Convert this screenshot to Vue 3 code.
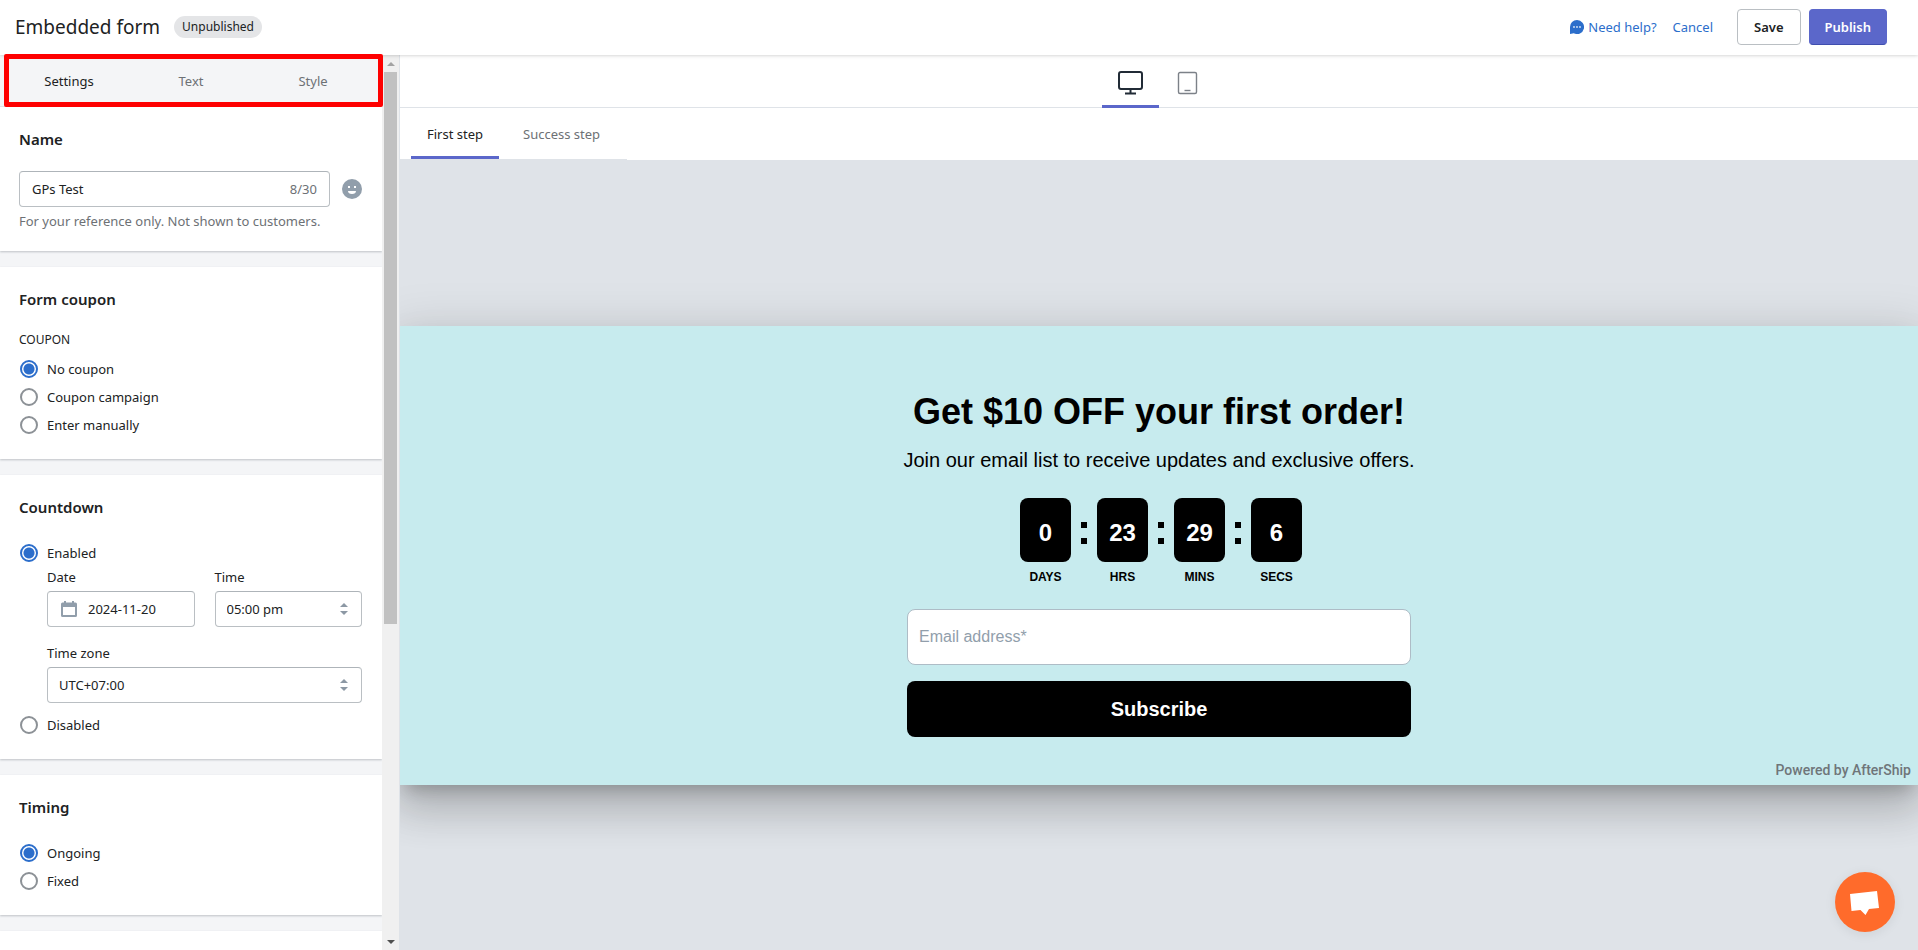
<script setup>
import { ref } from 'vue'

const panelTabs = ['Settings', 'Text', 'Style']
const panelTab = ref('Settings')
const stepTabs = ['First step', 'Success step']
const stepTab = ref('First step')
const device = ref('desktop')

const name = ref('GPs Test')
const coupon = ref('No coupon')
const countdown = ref('Enabled')
const date = ref('2024-11-20')
const timing = ref('Ongoing')
const couponOptions = ['No coupon', 'Coupon campaign', 'Enter manually']
const timingOptions = ['Ongoing', 'Fixed']
const units = [
  { value: 0, label: 'DAYS' },
  { value: 23, label: 'HRS' },
  { value: 29, label: 'MINS' },
  { value: 6, label: 'SECS' }
]
</script>

<template>
  <div class="page">
    <header class="topbar">
      <h1>Embedded form</h1>
      <span class="badge">Unpublished</span>
      <nav class="actions">
        <a href="#" class="help">
          <svg width="14" height="14" viewBox="0 0 14 14" aria-hidden="true">
            <path d="M7 0a7 7 0 1 1-3.2 13.2L0 14V7a7 7 0 0 1 7-7z" fill="#2c6ecb" />
            <circle cx="4" cy="7" r="0.9" fill="#dce8f8" />
            <circle cx="7" cy="7" r="0.9" fill="#dce8f8" />
            <circle cx="10" cy="7" r="0.9" fill="#dce8f8" />
          </svg>
          <span>Need help?</span>
        </a>
        <a href="#" class="cancel">Cancel</a>
        <button type="button" class="btn">Save</button>
        <button type="button" class="btn primary">Publish</button>
      </nav>
    </header>

    <div class="body">
      <aside class="sidebar">
        <div class="panel">
          <div class="panel-tabs" role="tablist">
            <button
              v-for="t in panelTabs"
              :key="t"
              type="button"
              role="tab"
              :aria-selected="panelTab === t"
              :class="{ active: panelTab === t }"
              @click="panelTab = t"
            >{{ t }}</button>
            <span class="highlight"></span>
          </div>

          <section class="card">
            <h2><label for="form-name">Name</label></h2>
            <div class="name-row">
              <div class="control">
                <input id="form-name" v-model="name" type="text" maxlength="30" />
                <span class="count">{{ name.length }}/30</span>
              </div>
              <button type="button" class="emoji" aria-label="Insert emoji">
                <svg width="20" height="20" viewBox="0 0 20 20">
                  <circle cx="10" cy="10" r="10" fill="#919eab" />
                  <rect x="6" y="7" width="2" height="2" fill="#fff" />
                  <rect x="12" y="7" width="2" height="2" fill="#fff" />
                  <path d="M6 12h8c0 1.800-1.500 3-4 3s-4-1.200-4-3z" fill="#fff" />
                </svg>
              </button>
            </div>
            <p class="hint">For your reference only. Not shown to customers.</p>
          </section>

          <section class="card">
            <h2>Form coupon</h2>
            <fieldset>
              <legend>COUPON</legend>
              <div class="options">
                <label v-for="o in couponOptions" :key="o" class="option">
                  <input v-model="coupon" type="radio" name="coupon" :value="o" />{{ o }}
                </label>
              </div>
            </fieldset>
          </section>

          <section class="card">
            <h2>Countdown</h2>
            <div class="options">
              <label class="option">
                <input v-model="countdown" type="radio" name="countdown" value="Enabled" />Enabled
              </label>
              <div class="schedule">
                <div class="field">
                  <label for="end-date">Date</label>
                  <div class="control date">
                    <svg width="16" height="16" viewBox="0 0 16 16" aria-hidden="true">
                      <path d="M3 0h2v1.500h6V0h2v1.500h1.500A1.500 1.500 0 0 1 16 3v11.500a1.500 1.500 0 0 1-1.500 1.500h-13A1.500 1.500 0 0 1 0 14.500V3a1.500 1.500 0 0 1 1.500-1.500H3zM2 6v8h12V6z" fill="#919eab" fill-rule="evenodd" />
                    </svg>
                    <input id="end-date" v-model="date" type="text" />
                  </div>
                </div>
                <div class="field">
                  <label for="end-time">Time</label>
                  <div class="control">
                    <select id="end-time"><option>05:00 pm</option></select>
                    <svg class="arrows" width="8" height="12" viewBox="0 0 8 12" aria-hidden="true">
                      <path d="M0 4l4-4 4 4zM0 8h8l-4 4z" fill="#8c98a4" />
                    </svg>
                  </div>
                </div>
                <div class="field wide">
                  <label for="zone">Time zone</label>
                  <div class="control">
                    <select id="zone"><option>UTC+07:00</option></select>
                    <svg class="arrows" width="8" height="12" viewBox="0 0 8 12" aria-hidden="true">
                      <path d="M0 4l4-4 4 4zM0 8h8l-4 4z" fill="#8c98a4" />
                    </svg>
                  </div>
                </div>
              </div>
              <label class="option">
                <input v-model="countdown" type="radio" name="countdown" value="Disabled" />Disabled
              </label>
            </div>
          </section>

          <section class="card">
            <h2>Timing</h2>
            <div class="options">
              <label v-for="o in timingOptions" :key="o" class="option">
                <input v-model="timing" type="radio" name="timing" :value="o" />{{ o }}
              </label>
            </div>
          </section>

          <section class="card"></section>
        </div>
        <div class="scrollbar" aria-hidden="true">
          <svg width="8" height="4" viewBox="0 0 8 4"><path d="M0 4l4-4 4 4z" fill="#a3a3a3" /></svg>
          <div class="track"><div class="thumb"></div></div>
          <svg width="8" height="4" viewBox="0 0 8 4"><path d="M0 0h8L4 4z" fill="#505050" /></svg>
        </div>
      </aside>

      <main class="preview">
        <div class="devices" role="tablist">
          <button
            type="button"
            role="tab"
            aria-label="Desktop"
            :class="{ active: device === 'desktop' }"
            @click="device = 'desktop'"
          >
            <svg width="25" height="24" viewBox="0 0 25 24" fill="none" stroke="#212b36">
              <rect x="1" y="1" width="23" height="17" rx="2" stroke-width="2" />
              <path d="M12.500 18v4M7 22.500h11" stroke-width="2" />
            </svg>
          </button>
          <button
            type="button"
            role="tab"
            aria-label="Mobile"
            :class="{ active: device === 'mobile' }"
            @click="device = 'mobile'"
          >
            <svg width="25" height="24" viewBox="0 0 25 24" fill="none" stroke="#7c8188">
              <rect x="3.500" y="1.500" width="18" height="21" rx="1.500" stroke-width="1.400" />
              <path d="M9.500 19.500h6" stroke-width="1.400" />
            </svg>
          </button>
        </div>
        <div class="steps-bar">
          <div class="steps" role="tablist">
            <button
              v-for="s in stepTabs"
              :key="s"
              type="button"
              role="tab"
              :aria-selected="stepTab === s"
              :class="{ active: stepTab === s }"
              @click="stepTab = s"
            >{{ s }}</button>
          </div>
        </div>
        <div class="canvas">
          <form class="embed" @submit.prevent>
            <div class="content">
              <h3>Get $10 OFF your first order!</h3>
              <p class="lead">Join our email list to receive updates and exclusive offers.</p>
              <div class="timer">
                <template v-for="(u, i) in units" :key="u.label">
                  <span v-if="i" class="colon"><i></i><i></i></span>
                  <div class="unit">
                    <strong>{{ u.value }}</strong>
                    <span>{{ u.label }}</span>
                  </div>
                </template>
              </div>
              <input type="email" placeholder="Email address*" aria-label="Email address" />
              <button type="submit">Subscribe</button>
            </div>
            <a href="#" class="powered">Powered by AfterShip</a>
          </form>
        </div>
      </main>
    </div>

    <button type="button" class="chat" aria-label="Open chat">
      <svg width="60" height="60" viewBox="0 0 60 60">
        <path d="M15 22l27-3 2 17-10 1-3.500 6-5-5-9 1z" fill="#fff" />
      </svg>
    </button>
  </div>
</template>

<style>
body {
  margin: 0;
}
</style>

<style scoped>
* {
  box-sizing: border-box;
}
.page {
  display: flex;
  flex-direction: column;
  height: 100vh;
  overflow: hidden;
  background: #fff;
  color: #202223;
  font: 13px/20px "Segoe UI", "Noto Sans", "Open Sans", sans-serif;
}
button,
input,
select {
  font: inherit;
  color: inherit;
  margin: 0;
}
button {
  border: 0;
  padding: 0;
  background: none;
  cursor: pointer;
}
svg {
  display: block;
  flex: none;
}
h1,
h2,
h3,
p {
  margin: 0;
}

.topbar {
  position: relative;
  z-index: 1;
  display: flex;
  align-items: center;
  height: 55px;
  padding: 0 31px 1px 15px;
  background: #fff;
  box-shadow: 0 0 4px rgba(0, 0, 0, 0.25);
}
h1 {
  font-size: 19px;
  line-height: 28px;
  font-weight: 400;
}
.badge {
  margin-left: 14px;
  padding: 1px 8px;
  border-radius: 11px;
  background: #e4e5e7;
  font-size: 12px;
}
.actions {
  display: flex;
  align-items: center;
  margin-left: auto;
}
.actions a {
  color: #2c6ecb;
  text-decoration: none;
}
.help {
  display: flex;
  align-items: center;
  gap: 4px;
}
.cancel {
  margin: 0 24px 0 16px;
}
.btn {
  height: 36px;
  padding: 0 16px;
  border: 1px solid #babfc3;
  border-radius: 4px;
  font-weight: 600;
}
.btn.primary {
  margin-left: 8px;
  padding: 0 15px;
  border-color: #5b67ca;
  border-bottom-color: #3f4eae;
  background: #5b67ca;
  color: #fff;
}

.body {
  display: flex;
  flex: 1;
  min-height: 0;
}
.sidebar {
  display: flex;
  flex: none;
  background: #f4f5f7;
}
.panel {
  width: 382px;
}
.panel-tabs {
  position: relative;
  z-index: 2;
  display: flex;
  height: 52px;
  padding: 0 8px;
  border-bottom: 1px solid #dfe3e8;
}
.panel-tabs button {
  flex: 1 1 0;
  color: #6d7175;
}
.panel-tabs button.active {
  color: #202223;
}
.highlight {
  position: absolute;
  inset: -1px -1px -1px 4px;
  border: 5px solid #fe0000;
  border-radius: 2px;
  pointer-events: none;
}
.card {
  min-height: 48px;
  margin-bottom: 16px;
  padding: 20px 20px 20px 19px;
  background: #fff;
  box-shadow: 0 1px 2px rgba(33, 43, 54, 0.25);
}
h2 {
  margin-bottom: 20px;
  font-size: 15px;
  line-height: 24px;
  font-weight: 600;
}
.name-row {
  display: flex;
  align-items: center;
  gap: 12px;
}
.name-row .control {
  flex: 1;
}
.emoji {
  height: 20px;
}
.control {
  position: relative;
  display: flex;
  align-items: center;
  height: 36px;
  border: 1px solid #babfc3;
  border-top-color: #aeb4b9;
  border-radius: 4px;
  background: #fff;
}
.control input {
  flex: 1;
  min-width: 0;
  height: 34px;
  padding: 0 12px;
  border: 0;
  outline: 0;
  background: none;
}
.control select {
  width: 100%;
  height: 34px;
  padding: 0 11px;
  border: 0;
  outline: 0;
  background: none;
  appearance: none;
}
.count {
  padding-right: 12px;
  color: #6d7175;
}
.arrows {
  position: absolute;
  right: 13px;
  pointer-events: none;
}
.date {
  padding-left: 13px;
}
.date input {
  padding: 0 11px;
}
.hint {
  margin-top: 4px;
  color: #6d7175;
}
fieldset {
  margin: -4px 0 0;
  padding: 0;
  border: 0;
}
legend {
  margin-bottom: 2px;
  padding: 0;
  font-size: 12px;
  line-height: 26px;
}
.option {
  display: flex;
  align-items: center;
  gap: 9px;
  height: 28px;
  padding-left: 1px;
}
.option input {
  width: 18px;
  height: 18px;
  border: 2px solid #8c9196;
  border-radius: 50%;
  background: #fff;
  appearance: none;
}
.option input:checked {
  border-color: #2c6ecb;
  background: radial-gradient(circle, #2c6ecb 5px, #fff 6px);
}
.schedule {
  display: grid;
  grid-template-columns: repeat(2, minmax(0, 1fr));
  gap: 16px 20px;
  margin: 0 0 8px 28px;
}
.field label {
  display: block;
  margin-bottom: 4px;
}
.field.wide {
  grid-column: 1 / -1;
}
.scrollbar {
  display: flex;
  flex-direction: column;
  align-items: center;
  width: 17px;
  padding: 7px 0 6px;
  background: #f0f0f0;
}
.track {
  flex: 1;
  width: 13px;
  margin: 6px 0;
}
.thumb {
  height: 64%;
  background: #c1c1c1;
}

.preview {
  display: flex;
  flex: 1;
  flex-direction: column;
  min-width: 0;
  border-left: 1px solid #dfe3e8;
}
.devices {
  display: flex;
  justify-content: center;
  height: 53px;
  border-bottom: 1px solid #dfe3e8;
}
.devices button {
  height: 53px;
  padding: 5px 16px 0;
  border-bottom: 3px solid transparent;
}
.devices .active,
.steps .active {
  border-bottom-color: #5b67ca;
}
.steps-bar {
  display: flex;
  height: 52px;
}
.steps {
  display: flex;
  gap: 8px;
  padding: 0 11px;
  border-bottom: 1px solid #dfe3e8;
}
.steps button {
  padding: 4px 16px 0;
  border-bottom: 3px solid transparent;
  color: #6d7175;
}
.steps .active {
  border-bottom-color: #5b67ca;
  color: #202223;
}
.canvas {
  display: flex;
  flex: 1;
  flex-direction: column;
  justify-content: center;
  overflow: hidden;
  background: #dfe3e8;
}
.embed {
  padding: 60px 0 5px;
  background: #c7ebee;
  box-shadow:
    0 11px 15px -7px rgba(0, 0, 0, 0.2),
    0 24px 38px 3px rgba(0, 0, 0, 0.14),
    0 9px 46px 8px rgba(0, 0, 0, 0.12);
  color: #000;
  font-family: Arial, "Liberation Sans", sans-serif;
}
.content {
  display: flex;
  flex-direction: column;
  align-items: center;
  width: 504px;
  max-width: 100%;
  margin: 0 auto;
}
h3 {
  font-size: 36px;
  line-height: 52px;
  white-space: nowrap;
}
.lead {
  margin-top: 8px;
  font-size: 20px;
  line-height: 28px;
  white-space: nowrap;
}
.timer {
  display: flex;
  margin: 24px 0 22px 4px;
}
.unit {
  display: flex;
  flex-direction: column;
  align-items: center;
  width: 51px;
}
.unit strong {
  width: 100%;
  height: 64px;
  padding-top: 3px;
  border-radius: 8px;
  background: #000;
  color: #fff;
  font-size: 24px;
  line-height: 64px;
  text-align: center;
}
.unit span {
  margin-top: 5px;
  font-size: 12px;
  font-weight: 700;
}
.colon {
  display: flex;
  flex-direction: column;
  align-items: center;
  gap: 10px;
  width: 26px;
  padding-top: 24px;
}
.colon i {
  width: 6px;
  height: 6px;
  background: #000;
}
.content input,
.content button {
  width: 100%;
  height: 56px;
  border-radius: 8px;
}
.content input {
  padding: 0 11px;
  border: 1px solid #aebcc6;
  background: #fff;
  font-size: 16px;
}
.content input::placeholder {
  color: #919eab;
  opacity: 1;
}
.content button {
  margin-top: 16px;
  background: #000;
  color: #fff;
  font-size: 20px;
  font-weight: 700;
}
.powered {
  display: block;
  width: max-content;
  margin: 23px 7px 0 auto;
  color: #6f7579;
  font: 500 14px/20px Roboto, sans-serif;
  text-decoration: none;
}
.chat {
  position: fixed;
  right: 23px;
  bottom: 18px;
  z-index: 3;
  width: 60px;
  height: 60px;
  border-radius: 50%;
  background: #ff6b2b;
  box-shadow: 0 2px 12px rgba(0, 0, 0, 0.08);
}
</style>
